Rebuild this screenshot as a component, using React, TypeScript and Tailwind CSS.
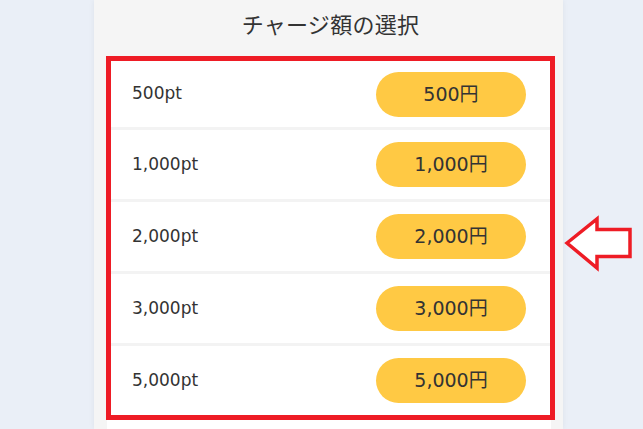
const plans = [
  { pt: '500pt', yen: '500円' },
  { pt: '1,000pt', yen: '1,000円' },
  { pt: '2,000pt', yen: '2,000円' },
  { pt: '3,000pt', yen: '3,000円' },
  { pt: '5,000pt', yen: '5,000円' },
];

export default function App() {
  return (
    <div
      className="relative w-[643px] h-[429px] overflow-hidden bg-[#eaeff7] text-[#333]"
      style={{ fontFamily: '"DejaVu Sans", "Noto Sans CJK JP", sans-serif' }}
    >
      {/* Panel */}
      <div className="ml-[94px] w-[469px] h-full bg-[#f5f5f5] pl-[12px] pr-[8px] shadow-[0_0_6px_rgba(0,0,0,0.06)]">
        <h2 className="h-[56px] flex items-center justify-center text-[22px] pb-[6px] tracking-[0.3px]">
          チャージ額の選択
        </h2>

        {/* Amount list */}
        <div className="border-[5px] border-[#ee1c25] bg-white">
          {plans.map((p, i) => (
            <div
              key={p.pt}
              className={`flex items-center justify-between pl-[21px] pr-[24px] ${
                i === 0 ? 'h-[66px]' : 'h-[72px] border-t-[3px] border-[#f3f3f3]'
              }`}
            >
              <span className="text-[17px]">{p.pt}</span>
              <button className="w-[150px] h-[45px] rounded-full bg-[#ffc944] text-[19px] text-[#333] flex items-center justify-center">
                {p.yen}
              </button>
            </div>
          ))}
        </div>
        <div className="ml-[1px] mr-[4px] h-[20px] bg-white" />
      </div>

      {/* Annotation arrow */}
      <svg
        viewBox="0 0 80 66"
        className="absolute left-[560px] top-[210px] w-[80px] h-[66px]"
      >
        <polygon
          points="7,33 37,9 37,19.5 70,19.5 70,46.5 37,46.5 37,58"
          fill="#fff"
          stroke="#ee1c25"
          strokeWidth={3.5}
          strokeLinejoin="miter"
        />
      </svg>
    </div>
  );
}
